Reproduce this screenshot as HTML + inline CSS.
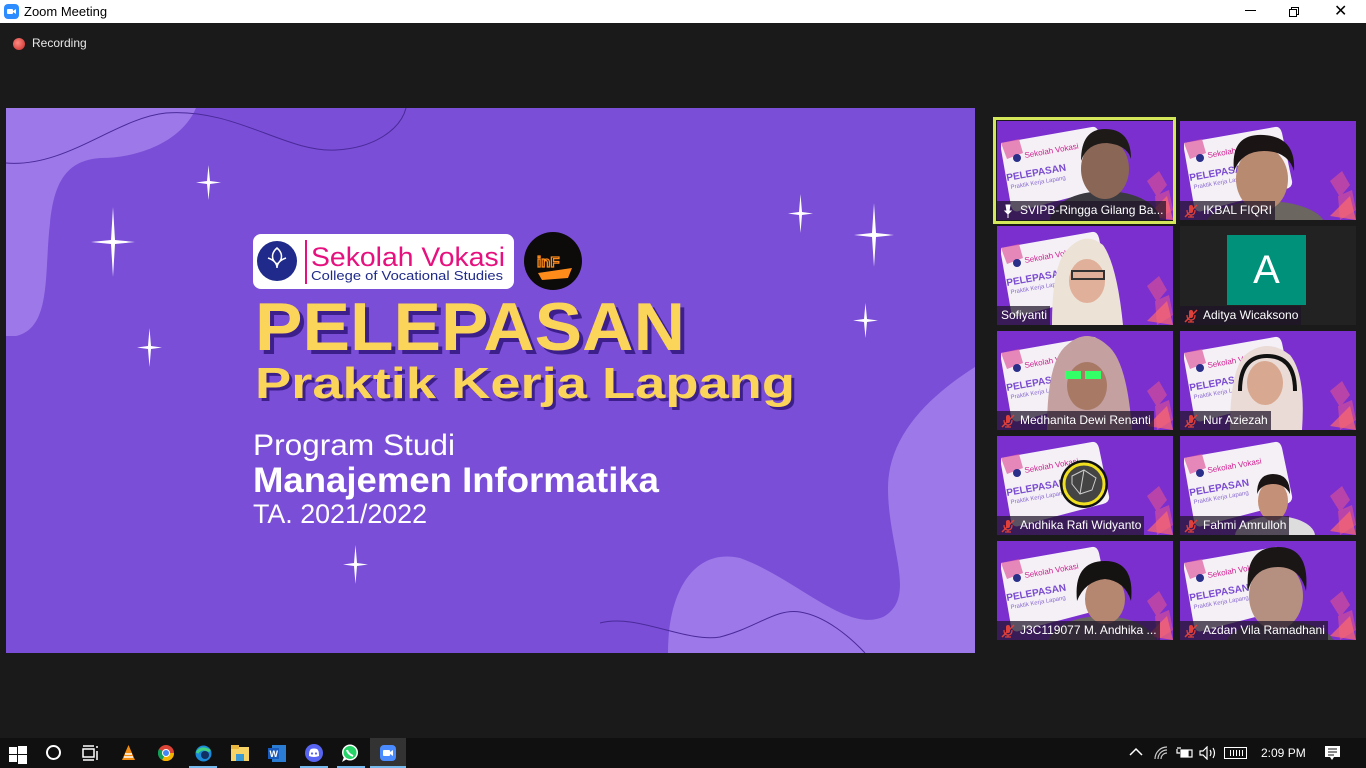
<!DOCTYPE html>
<html><head><meta charset="utf-8">
<style>
*{margin:0;padding:0;box-sizing:border-box}
body{width:1366px;height:768px;overflow:hidden;background:#1a1a1a;font-family:"Liberation Sans",sans-serif;position:relative}
.abs{position:absolute}
.title{left:0;top:0;width:1366px;height:23px;background:#fff}
.tile{position:absolute;width:176px;height:99px;overflow:hidden;background:#7a30d0}
.lbl{position:absolute;left:0;bottom:0;height:19px;background:rgba(30,20,40,.72);color:#fff;font-size:12px;line-height:19px;padding:0 3px 0 4px;white-space:nowrap;display:flex;align-items:center}
.mic{width:14px;height:14px;margin-right:5px}
.task{left:0;top:738px;width:1366px;height:30px;background:#101010}
</style></head><body>
<svg width="0" height="0" style="position:absolute">
<defs>
<symbol id="bg" viewBox="0 0 176 99">
<rect width="176" height="99" fill="#7b2fcf"/>
<path d="M150 60 l12 -10 l8 14 l-10 12z M158 75 l14 -6 l4 20 l-16 10z" fill="#c84aa0" opacity=".8"/>
<path d="M150 95 l20 -20 l6 24z" fill="#ff6a6a" opacity=".7"/>
<path d="M4 22 L95 6 Q100 5 102 12 L112 60 Q113 66 106 68 L22 90 Q16 92 14 85 L4 28z" fill="#f4f0f6"/>
<path d="M4 22 l18 -4 l4 14 l-16 6z" fill="#e05aa0" opacity=".7"/>
<circle cx="20" cy="37" r="4" fill="#2a2f8a"/>
<text x="28" y="37" font-size="8" fill="#d02090" font-family="Liberation Sans" transform="rotate(-10 28 37)">Sekolah Vokasi</text>
<text x="10" y="60" font-size="10" font-weight="bold" fill="#7a4bd0" font-family="Liberation Sans" transform="rotate(-10 10 60)">PELEPASAN</text>
<text x="14" y="68" font-size="6" fill="#8a6ad0" font-family="Liberation Sans" transform="rotate(-10 14 68)">Praktik Kerja Lapang</text>
</symbol>
<symbol id="mic" viewBox="0 0 14 14"><rect x="5" y="1" width="4" height="8" rx="2" fill="#e0403a"/><path d="M3 6 q0 5 4 5 q4 0 4 -5 M7 11 v2 M4 13 h6" stroke="#e0403a" fill="none" stroke-width="1.2"/><path d="M1 13 L13 1" stroke="#e0403a" stroke-width="1.5"/></symbol>
</defs></svg>

<div class="abs title">
 <svg class="abs" style="left:4px;top:4px" width="15" height="15" viewBox="0 0 15 15"><rect width="15" height="15" rx="4" fill="#2d8cff"/><rect x="3" y="5" width="6" height="5" rx="1" fill="#fff"/><path d="M9 7 l3 -2 v5 l-3 -2z" fill="#fff"/></svg>
 <div class="abs" style="left:24px;top:4px;font-size:13px;color:#000">Zoom Meeting</div>
 <div class="abs" style="left:1245px;top:10px;width:11px;height:1px;background:#000"></div>
 <div class="abs" style="left:1291px;top:7px;width:8px;height:8px;border:1px solid #000;background:#fff"></div>
 <div class="abs" style="left:1289px;top:9px;width:8px;height:8px;border:1px solid #000;background:#fff"></div>
 <div class="abs" style="left:1334px;top:1px;font-size:16px;color:#000">✕</div>
</div>
<div class="abs" style="left:13px;top:38px;width:12px;height:12px;border-radius:50%;background:radial-gradient(circle at 40% 40%,#ff8a80,#c62828)"></div>
<div class="abs" style="left:32px;top:36px;font-size:12px;color:#e8e8e8">Recording</div>

<svg class="abs" style="left:6px;top:108px" width="969" height="545" viewBox="0 0 969 545">
<rect width="969" height="545" fill="#7a4ed6"/>
<path d="M0 0 L190 0 C175 35 130 50 95 50 C60 52 48 75 44 115 C38 165 46 220 10 228 L0 228Z" fill="#9d78e9"/>
<path d="M0 55 C60 60 110 10 160 5 C230 0 280 45 330 42 C370 40 395 20 400 0" stroke="#4a2a9a" stroke-width="1" fill="none"/>
<path d="M969 259 C920 290 882 330 882 380 C882 440 912 490 877 509 C840 525 790 470 734 450 C690 440 662 480 662 545 L969 545Z" fill="#9d78e9"/>
<path d="M594 515 C630 505 680 535 714 529 C750 520 770 500 794 504 C820 508 845 530 859 545" stroke="#4a2a9a" stroke-width="1" fill="none"/>
<g fill="#fff">
<path d="M201 73 l1.5 -16 l1.5 16 l11 1.5 l-11 1.5 l-1.5 16 l-1.5 -16 l-11 -1.5z"/>
<path d="M105 132 l2 -33 l2 33 l20 2 l-20 2 l-2 33 l-2 -33 l-20 -2z"/>
<path d="M142 238 l1.5 -18 l1.5 18 l11 1.5 l-11 1.5 l-1.5 18 l-1.5 -18 l-11 -1.5z"/>
<path d="M793 104 l1.5 -18 l1.5 18 l11 1.5 l-11 1.5 l-1.5 18 l-1.5 -18 l-11 -1.5z"/>
<path d="M866 125 l2 -30 l2 30 l18 2 l-18 2 l-2 30 l-2 -30 l-18 -2z"/>
<path d="M858 211 l1.5 -16 l1.5 16 l11 1.5 l-11 1.5 l-1.5 16 l-1.5 -16 l-11 -1.5z"/>
<path d="M348 455 l1.5 -18 l1.5 18 l11 1.5 l-11 1.5 l-1.5 18 l-1.5 -18 l-11 -1.5z"/>
</g>
<rect x="247" y="126" width="261" height="55" rx="8" fill="#fff"/>
<circle cx="271" cy="153" r="20" fill="#1f2a8a"/>
<path d="M271 140 c-6 5 -6 12 0 16 c6 -4 6 -11 0 -16z M262 150 q9 3 9 10 q0 -7 9 -10" stroke="#fff" fill="none" stroke-width="1.5"/>
<rect x="299" y="132" width="2" height="44" fill="#e6117f"/>
<text x="305" y="158" font-size="27" fill="#e6117f" font-family="Liberation Sans" textLength="194" lengthAdjust="spacingAndGlyphs">Sekolah Vokasi</text>
<text x="305" y="172" font-size="13" fill="#1f2a8a" font-family="Liberation Sans" textLength="192" lengthAdjust="spacingAndGlyphs">College of Vocational Studies</text>
<circle cx="547" cy="153" r="29" fill="#0d0a0a"/>
<text x="531" y="159" font-size="15" font-weight="bold" fill="none" stroke="#ff8c1a" stroke-width="1.3" font-family="Liberation Sans">inF</text>
<path d="M532 165 L566 160 L562 170 L536 172z" fill="#ff8c1a"/>
<g font-family="Liberation Sans" font-weight="bold">
<text x="253" y="246" font-size="68" fill="#3d1f8c" textLength="430" lengthAdjust="spacingAndGlyphs">PELEPASAN</text>
<text x="249" y="242" font-size="68" fill="#fbd45a" textLength="430" lengthAdjust="spacingAndGlyphs">PELEPASAN</text>
<text x="252" y="293" font-size="44" fill="#3d1f8c" textLength="540" lengthAdjust="spacingAndGlyphs">Praktik Kerja Lapang</text>
<text x="249" y="290" font-size="44" fill="#fbd45a" textLength="540" lengthAdjust="spacingAndGlyphs">Praktik Kerja Lapang</text>
</g>
<g font-family="Liberation Sans" fill="#fff">
<text x="247" y="347" font-size="30" textLength="202" lengthAdjust="spacingAndGlyphs">Program Studi</text>
<text x="247" y="384" font-size="35" font-weight="bold" textLength="406" lengthAdjust="spacingAndGlyphs">Manajemen Informatika</text>
<text x="247" y="415" font-size="27" textLength="174" lengthAdjust="spacingAndGlyphs">TA. 2021/2022</text>
</g>
</svg>

<div class="abs" style="left:993px;top:117px;width:183px;height:107px;border:3px solid #d4e65a"></div>

<div class="tile" style="left:997px;top:121px"><svg width="176" height="99"><use href="#bg"/><ellipse cx="108" cy="100" rx="55" ry="30" fill="#3a3a40"/><ellipse cx="108" cy="48" rx="24" ry="30" fill="#8a6656"/><path d="M84 40 q0 -32 24 -32 q26 0 26 30 q-4 -14 -24 -16 q-20 0 -26 18z" fill="#1e1a18"/></svg><div class="lbl"><svg class="mic" viewBox="0 0 14 14"><path d="M5 1 h4 l-1 6 h2 l-3 3 l-3 -3 h2z M7 10 v4" fill="#fff" stroke="#fff"/></svg>SVIPB-Ringga Gilang Ba...</div></div>
<div class="tile" style="left:1180px;top:121px"><svg width="176" height="99"><use href="#bg"/><ellipse cx="85" cy="105" rx="60" ry="25" fill="#6b6660"/><ellipse cx="82" cy="58" rx="26" ry="32" fill="#b88a70"/><path d="M54 50 q-4 -38 30 -36 q32 2 30 36 q-6 -20 -30 -20 q-22 0 -30 20z" fill="#1a1414"/></svg><div class="lbl"><svg class="mic"><use href="#mic"/></svg>IKBAL FIQRI</div></div>
<div class="tile" style="left:997px;top:226px"><svg width="176" height="99"><use href="#bg"/><path d="M55 99 q0 -60 15 -75 q18 -20 36 -5 q14 20 20 80z" fill="#ece2d6"/><ellipse cx="90" cy="55" rx="18" ry="22" fill="#e0b09a"/><rect x="75" y="45" width="32" height="8" fill="none" stroke="#333" stroke-width="2"/></svg><div class="lbl">Sofiyanti</div></div>
<div class="tile" style="left:1180px;top:226px;background:#222"><div class="abs" style="left:47px;top:9px;width:79px;height:70px;background:#00917a;color:#fff;font-size:40px;text-align:center;line-height:70px">A</div><div class="lbl"><svg class="mic"><use href="#mic"/></svg>Aditya Wicaksono</div></div>
<div class="tile" style="left:997px;top:331px"><svg width="176" height="99"><use href="#bg"/><path d="M50 99 q0 -70 20 -85 q20 -18 40 0 q20 15 25 85z" fill="#c4a0a0"/><ellipse cx="90" cy="55" rx="20" ry="24" fill="#a87a66"/><rect x="68" y="40" width="16" height="8" fill="#3f6"/><rect x="88" y="40" width="16" height="8" fill="#3f6"/></svg><div class="lbl"><svg class="mic"><use href="#mic"/></svg>Medhanita Dewi Renanti</div></div>
<div class="tile" style="left:1180px;top:331px"><svg width="176" height="99"><use href="#bg"/><path d="M50 99 q0 -60 15 -75 q22 -18 45 0 q16 20 12 75z" fill="#eadbd6"/><ellipse cx="85" cy="52" rx="18" ry="22" fill="#d8a890"/><path d="M60 60 q0 -35 27 -35 q28 0 28 35" stroke="#111" stroke-width="4" fill="none"/></svg><div class="lbl"><svg class="mic"><use href="#mic"/></svg>Nur Aziezah</div></div>
<div class="tile" style="left:997px;top:436px"><svg width="176" height="99"><use href="#bg"/><circle cx="87" cy="48" r="24" fill="#111"/><circle cx="87" cy="48" r="20" fill="#444" stroke="#f0e020" stroke-width="3"/><path d="M75 40 l12 -6 l12 8 l-4 12 l-12 4 l-8 -10z M87 34 l-4 24" stroke="#ccc" stroke-width="1" fill="none"/></svg><div class="lbl"><svg class="mic"><use href="#mic"/></svg>Andhika Rafi Widyanto</div></div>
<div class="tile" style="left:1180px;top:436px"><svg width="176" height="99"><use href="#bg"/><ellipse cx="95" cy="100" rx="40" ry="20" fill="#ddd"/><ellipse cx="93" cy="65" rx="15" ry="20" fill="#c49078"/><path d="M77 58 q0 -20 16 -20 q17 0 17 20 q-5 -10 -17 -10 q-12 0 -16 10z" fill="#1a1414"/></svg><div class="lbl"><svg class="mic"><use href="#mic"/></svg>Fahmi Amrulloh</div></div>
<div class="tile" style="left:997px;top:541px"><svg width="176" height="99"><use href="#bg"/><ellipse cx="105" cy="105" rx="55" ry="30" fill="#6a6662"/><ellipse cx="108" cy="58" rx="20" ry="25" fill="#b58670"/><path d="M80 60 q-4 -40 28 -40 q30 0 26 40 q-6 -20 -26 -22 q-20 2 -28 22z" fill="#151212"/></svg><div class="lbl"><svg class="mic"><use href="#mic"/></svg>J3C119077 M. Andhika ...</div></div>
<div class="tile" style="left:1180px;top:541px"><svg width="176" height="99"><use href="#bg"/><ellipse cx="100" cy="105" rx="55" ry="25" fill="#555"/><ellipse cx="96" cy="55" rx="27" ry="34" fill="#b58f80"/><path d="M68 50 q-4 -44 30 -44 q32 0 28 44 q-6 -24 -28 -24 q-24 0 -30 24z" fill="#1a1616"/></svg><div class="lbl"><svg class="mic"><use href="#mic"/></svg>Azdan Vila Ramadhani</div></div>

<div class="abs task">
 <svg class="abs" style="left:9px;top:8px" width="18" height="18" viewBox="0 0 18 18" fill="#fff"><rect x="0" y="1" width="8" height="7"/><rect x="9" y="0" width="9" height="8"/><rect x="0" y="9" width="8" height="7"/><rect x="9" y="9" width="9" height="9"/></svg>
 <div class="abs" style="left:46px;top:7px;width:15px;height:15px;border:2px solid #fff;border-radius:50%"></div>
 <svg class="abs" style="left:81px;top:7px" width="18" height="16" fill="none" stroke="#fff" stroke-width="1.5"><rect x="2" y="4" width="11" height="8"/><path d="M2 1h11M2 15h11M16 1v2M16 6v9"/></svg>
 <svg class="abs" style="left:120px;top:6px" width="17" height="18"><path d="M8.5 1 L15 16 H2z" fill="#f28c10"/><path d="M5 10h7M4 13h9" stroke="#fff" stroke-width="1.5"/></svg>
 <svg class="abs" style="left:158px;top:7px" width="16" height="16"><circle cx="8" cy="8" r="8" fill="#db4437"/><path d="M8 8 L16 8 A8 8 0 0 1 4 15z" fill="#f4b400"/><path d="M8 8 L4 15 A8 8 0 0 1 1 4z" fill="#0f9d58"/><circle cx="8" cy="8" r="3.5" fill="#4285f4" stroke="#fff"/></svg>
 <svg class="abs" style="left:195px;top:7px" width="17" height="17"><circle cx="8.5" cy="8.5" r="8" fill="#1b8ad8"/><circle cx="10" cy="10" r="4" fill="#0f3060"/><path d="M2 8 q4 -7 13 -2" stroke="#40d080" stroke-width="3" fill="none"/></svg>
 <div class="abs" style="left:189px;top:28px;width:28px;height:2px;background:#76b9ed"></div>
 <svg class="abs" style="left:231px;top:7px" width="18" height="16"><rect x="0" y="2" width="18" height="14" fill="#f8d366"/><rect x="0" y="0" width="8" height="4" fill="#e8b840"/><rect x="5" y="9" width="8" height="7" fill="#3a9ad8"/></svg>
 <svg class="abs" style="left:268px;top:7px" width="18" height="17"><rect x="4" y="0" width="14" height="17" fill="#2b7cd3"/><rect x="0" y="3" width="11" height="11" fill="#185abd"/><text x="1.5" y="12" font-size="9" font-weight="bold" fill="#fff" font-family="Liberation Sans">W</text></svg>
 <div class="abs" style="left:300px;top:28px;width:28px;height:2px;background:#76b9ed"></div>
 <svg class="abs" style="left:305px;top:6px" width="18" height="18"><circle cx="9" cy="9" r="9" fill="#5865f2"/><path d="M4 12 q0 -6 2 -7 q3 -1 6 0 q2 1 2 7 q-5 2 -10 0z" fill="#fff"/><circle cx="7" cy="9.5" r="1.1" fill="#5865f2"/><circle cx="11" cy="9.5" r="1.1" fill="#5865f2"/></svg>
 <svg class="abs" style="left:341px;top:6px" width="18" height="18"><circle cx="9" cy="8.5" r="8" fill="#fff"/><circle cx="9" cy="8.5" r="6.5" fill="#25d366"/><path d="M1 18 l2 -5 l3 2z" fill="#fff"/><path d="M6 6 q1 4 6 6" stroke="#fff" stroke-width="2" fill="none"/></svg>
 <div class="abs" style="left:337px;top:28px;width:28px;height:2px;background:#76b9ed"></div>
 <div class="abs" style="left:370px;top:0;width:36px;height:30px;background:#333"></div>
 <svg class="abs" style="left:380px;top:7px" width="16" height="16"><rect width="16" height="16" rx="4" fill="#4a8cff"/><rect x="3" y="5" width="7" height="6" rx="1" fill="#fff"/><path d="M10 7 l3 -2 v6 l-3 -2z" fill="#fff"/></svg>
 <div class="abs" style="left:370px;top:28px;width:36px;height:2px;background:#76b9ed"></div>
 <svg class="abs" style="left:1129px;top:9px" width="14" height="10" fill="none" stroke="#fff" stroke-width="1.5"><path d="M1 8 L7 2 L13 8"/></svg>
 <svg class="abs" style="left:1154px;top:8px" width="14" height="14" fill="none" stroke="#ccc" stroke-width="1.2"><path d="M1 13 a12 12 0 0 1 12 -12 M4 13 a9 9 0 0 1 9 -9 M7 13 a6 6 0 0 1 6 -6"/></svg>
 <svg class="abs" style="left:1176px;top:8px" width="18" height="14" fill="none" stroke="#fff" stroke-width="1.2"><rect x="5" y="4" width="11" height="7"/><rect x="6" y="5" width="6" height="5" fill="#fff"/><path d="M1 3 v4 h3 M2 1 v2 M4 1 v2"/></svg>
 <svg class="abs" style="left:1199px;top:8px" width="18" height="14" fill="none" stroke="#fff" stroke-width="1.2"><path d="M1 5 h3 l4 -4 v12 l-4 -4 h-3z M11 4 q2 3 0 6 M14 2 q3 5 0 10"/></svg>
 <div class="abs" style="left:1224px;top:9px;width:23px;height:12px;border:1px solid #fff;background:repeating-linear-gradient(90deg,transparent 0 2px,#fff 2px 3px) 3px 2px/17px 6px no-repeat"></div>
 <div class="abs" style="left:1261px;top:8px;color:#fff;font-size:12px">2:09 PM</div>
 <svg class="abs" style="left:1324px;top:7px" width="17" height="17"><path d="M1 1 h15 v11 h-6 l-2 3 l-2 -3 h-5z" fill="#fff"/><path d="M4 4h9M4 7h9M4 10h6" stroke="#101010"/></svg>
</div>
</body></html>
